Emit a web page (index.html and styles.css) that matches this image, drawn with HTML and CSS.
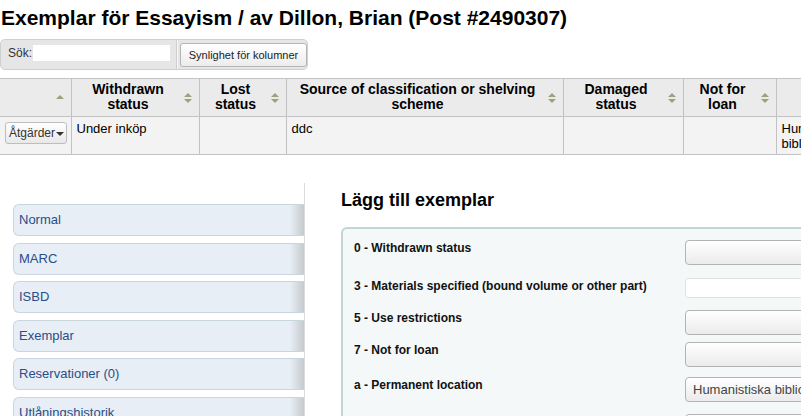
FILE: index.html
```html
<!DOCTYPE html>
<html>
<head>
  <title>Exemplar för Essayism</title>
  <link rel="stylesheet" href="styles.css">
</head>
<body>
  <h1>Exemplar för Essayism / av Dillon, Brian (Post #2490307)</h1>

  <div class="toolbar">
    <label for="search">Sök:</label>
    <input type="text" id="search">
    <span class="toolbar-sep"></span>
    <button type="button" class="colvis">Synlighet för kolumner</button>
  </div>

  <div class="table-wrap">
    <table class="items">
      <colgroup>
        <col style="width:71px">
        <col style="width:128px">
        <col style="width:87px">
        <col style="width:277px">
        <col style="width:120px">
        <col style="width:93px">
        <col style="width:120px">
      </colgroup>
      <thead>
        <tr>
          <th><span class="sort asc"></span></th>
          <th>Withdrawn status<span class="sort"></span></th>
          <th>Lost status<span class="sort"></span></th>
          <th>Source of classification or shelving scheme<span class="sort"></span></th>
          <th>Damaged status<span class="sort"></span></th>
          <th>Not for loan<span class="sort"></span></th>
          <th>&nbsp;</th>
        </tr>
      </thead>
      <tbody>
        <tr>
          <td><button type="button" class="actions">Åtgärder<span class="caret"></span></button></td>
          <td>Under inköp</td>
          <td></td>
          <td>ddc</td>
          <td></td>
          <td></td>
          <td>Humanistiska bibliotek</td>
        </tr>
      </tbody>
    </table>
  </div>

  <div class="content">
    <nav class="sidebar">
      <ul class="tabs">
        <li><a href="#">Normal</a></li>
        <li><a href="#">MARC</a></li>
        <li><a href="#">ISBD</a></li>
        <li><a href="#">Exemplar</a></li>
        <li><a href="#">Reservationer (0)</a></li>
        <li><a href="#">Utlåningshistorik</a></li>
      </ul>
    </nav>

    <section class="main">
      <h2>Lägg till exemplar</h2>
      <fieldset class="item-form">
        <ol>
          <li class="row-a">
            <label>0 - Withdrawn status</label>
            <select></select>
          </li>
          <li class="row-b">
            <label>3 - Materials specified (bound volume or other part)</label>
            <input type="text">
          </li>
          <li class="row-c">
            <label>5 - Use restrictions</label>
            <select></select>
          </li>
          <li class="row-d">
            <label>7 - Not for loan</label>
            <select></select>
          </li>
          <li class="row-e">
            <label>a - Permanent location</label>
            <select><option>Humanistiska biblioteket</option></select>
          </li>
          <li>
            <label>c - Shelving location</label>
            <select></select>
          </li>
        </ol>
      </fieldset>
    </section>
  </div>
</body>
</html>
```

FILE: styles.css
```css
/* Reset */
html, body {
  overflow: hidden;
}

body, h1, h2, ul, ol, li {
  margin: 0;
  padding: 0;
}

body {
  font-family: "Liberation Sans", Arial, sans-serif;
  color: #000;
  background-color: #fff;
}

h1 {
  font-size: 21px;
  line-height: 24px;
  margin: 6px 0 0 1px;
}

/* Search toolbar */
.toolbar {
  display: flex;
  align-items: center;
  width: 306px;
  height: 29px;
  margin-top: 9px;
  background-color: #e6e6e6;
  border: 1px solid #cfcfcf;
  border-radius: 5px;
  font-size: 12px;
  color: #333;
}

.toolbar label {
  margin-left: 7px;
  margin-bottom: 4px;
}

.toolbar input {
  width: 137px;
  height: 16px;
  margin: 0 0 4px 1px;
  padding: 0;
  border: none;
  background-color: #fff;
}

.toolbar-sep {
  align-self: stretch;
  width: 1px;
  margin-left: 6px;
  background-color: #cfcfcf;
  border-right: 1px solid #f6f6f6;
}

.colvis {
  margin-left: 2px;
  width: 128px;
  height: 24px;
  padding: 0;
  font-family: "Liberation Sans", Arial, sans-serif;
  font-size: 11px;
  color: #222;
  background: linear-gradient(#ffffff, #ececec);
  border: 1px solid #b5b5b5;
  border-radius: 3px;
}

/* Items table */
.table-wrap {
  margin-top: 8px;
  width: 801px;
  overflow: hidden;
}

.items {
  border-collapse: collapse;
  table-layout: fixed;
  width: 896px;
}

.items th,
.items td {
  border: 1px solid #c2c2c2;
}

.items th {
  position: relative;
  background-color: #ebebeb;
  font-size: 14px;
  line-height: 15px;
  padding: 3px 18px 4px 4px;
  height: 30px;
  box-sizing: border-box;
  text-align: center;
}

.items td {
  background-color: #f3f3f3;
  font-size: 13px;
  line-height: 15px;
  padding: 4px 4px 3px 5px;
  height: 28px;
  vertical-align: top;
}

.items th:first-child {
  border-left: none;
}

.items td:first-child {
  border-left: none;
}

.sort {
  position: absolute;
  right: 7px;
  top: 14px;
  width: 8px;
  height: 10px;
}

.sort::before,
.sort::after {
  content: "";
  position: absolute;
  left: 0;
  border-left: 4px solid transparent;
  border-right: 4px solid transparent;
}

.sort::before {
  top: 0;
  border-bottom: 4px solid #98a57c;
}

.sort::after {
  bottom: 0;
  border-top: 4px solid #98a57c;
}

.sort.asc {
  right: 7px;
  top: 16px;
}

.sort.asc::after {
  display: none;
}

.actions {
  width: 62px;
  height: 22px;
  margin-top: 1px;
  padding: 0 0 0 3px;
  text-align: left;
  font-family: "Liberation Sans", Arial, sans-serif;
  font-size: 12px;
  color: #333;
  background: linear-gradient(#ffffff, #e8e8e8);
  border: 1px solid #bdbdbd;
  border-radius: 3px;
}

.caret {
  display: inline-block;
  margin-left: 1px;
  vertical-align: middle;
  border-left: 4px solid transparent;
  border-right: 4px solid transparent;
  border-top: 4px solid #333;
}

/* Lower area */
.content {
  display: flex;
  margin-top: 28px;
}

.sidebar {
  flex: none;
  width: 304px;
  height: 260px;
  border-right: 1px solid #dcdcdc;
}

.tabs {
  list-style: none;
  margin: 21px 0 0 13px;
}

.tabs li {
  margin-bottom: 6.6px;
}

.tabs a {
  display: block;
  height: 30px;
  line-height: 30px;
  padding-left: 5px;
  font-size: 13px;
  color: #2b4d88;
  text-decoration: none;
  border: 1px solid #c9d7dd;
  border-right: none;
  border-radius: 6px 0 0 6px;
  background: linear-gradient(to right, #e7eef5 0, #e7eef5 calc(100% - 14px), #c6cacd 100%);
}

.main {
  flex: none;
  margin-left: 36px;
  padding-top: 6px;
}

h2 {
  font-size: 18px;
  line-height: 22px;
  margin-bottom: 16px;
}

.item-form {
  width: 560px;
  margin: 0;
  padding: 11px 0 0 11px;
  background-color: #f4f8f9;
  border: 2px solid #c3d6d6;
  border-radius: 6px;
}

.item-form ol {
  list-style: none;
}

.item-form li {
  display: flex;
  align-items: flex-start;
  margin-bottom: 12px;
}

.item-form li.row-a {
  margin-bottom: 13px;
}

.item-form li.row-c {
  margin-bottom: 7px;
}

.item-form li.row-d {
  margin-bottom: 10px;
}

.item-form label {
  width: 331px;
  flex-shrink: 0;
  margin-top: 1px;
  font-size: 12px;
  font-weight: bold;
  line-height: 14px;
  color: #111;
}

.item-form select {
  appearance: none;
  width: 200px;
  height: 25px;
  padding: 0 0 0 7px;
  font-family: "Liberation Sans", Arial, sans-serif;
  font-size: 13px;
  color: #444;
  background: linear-gradient(#ffffff, #ebebeb);
  border: 1px solid #b3b3b3;
  border-radius: 4px;
}

.item-form input {
  width: 200px;
  height: 20px;
  padding: 0;
  box-sizing: border-box;
  background-color: #fff;
  border: 1px solid #e2e2e2;
  border-radius: 3px;
}
```
